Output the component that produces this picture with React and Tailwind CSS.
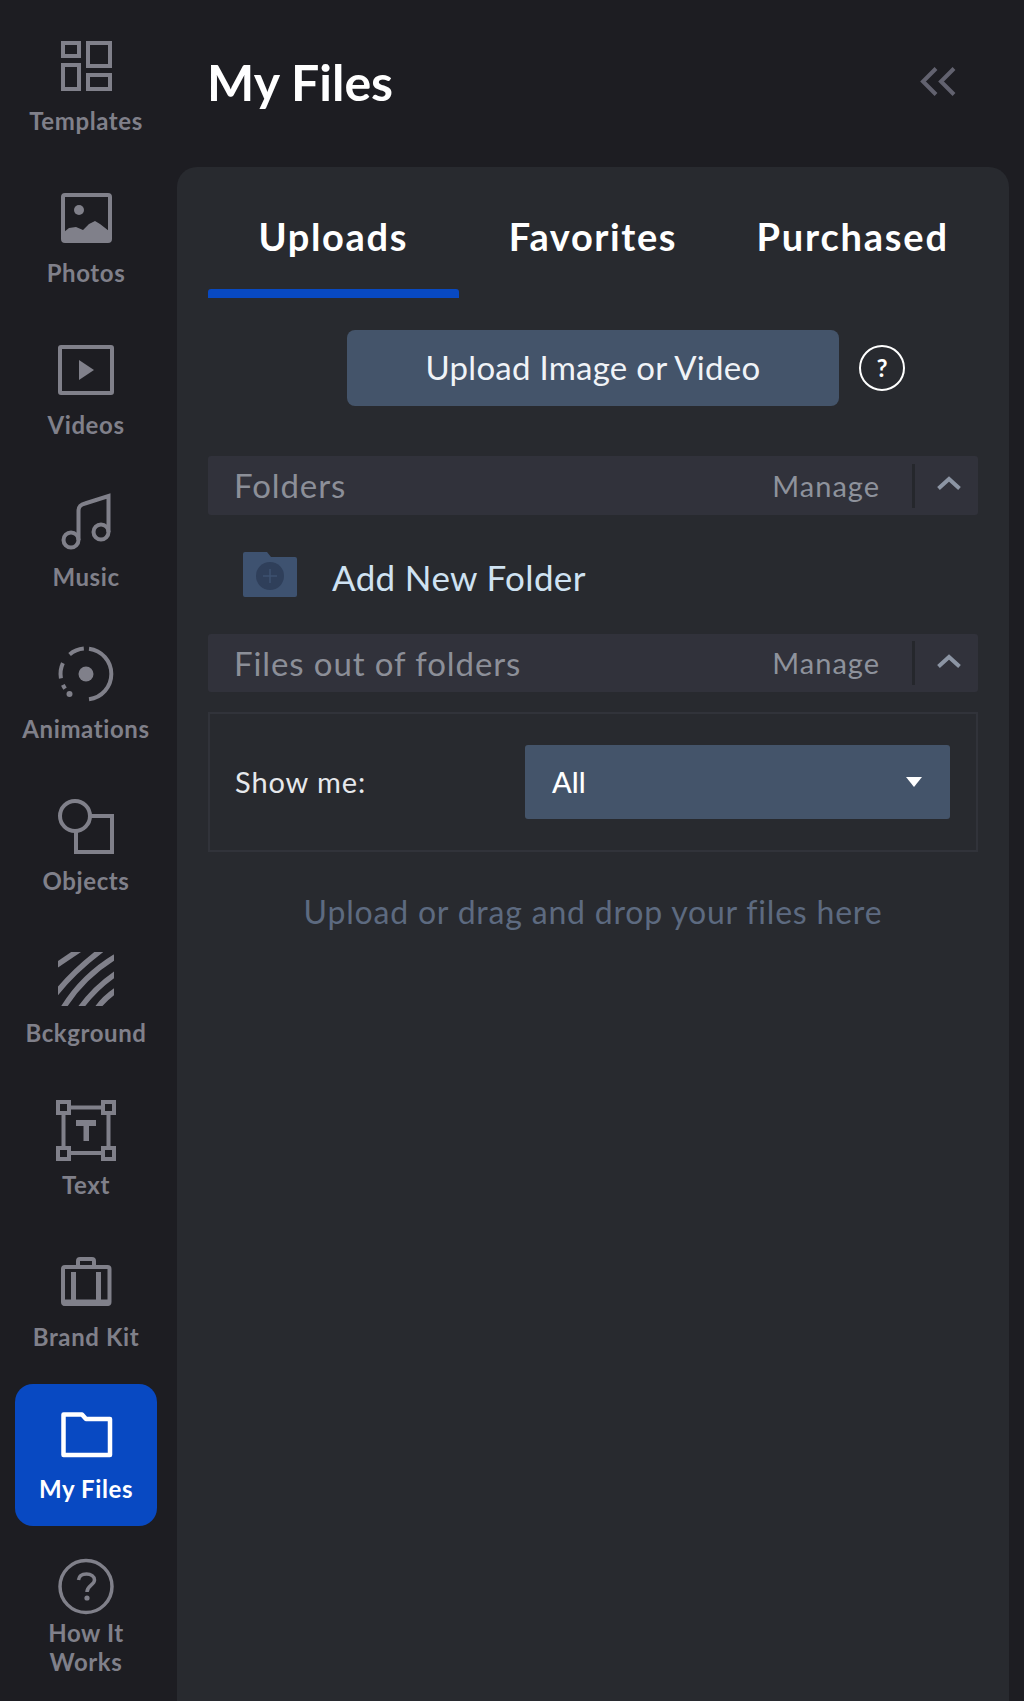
import React from "react";

const IconTemplates = () => (
  <svg viewBox="0 0 56 56" className="w-14 h-14 overflow-visible" fill="none" stroke="currentColor" strokeWidth="4">
    <rect x="5" y="5" width="16" height="13" />
    <rect x="30" y="5" width="22" height="23" />
    <rect x="5" y="27" width="16" height="24" />
    <rect x="30" y="37" width="22" height="14" />
  </svg>
);

const IconPhotos = () => (
  <svg viewBox="0 0 56 56" className="w-14 h-14 overflow-visible" fill="none" stroke="currentColor" strokeWidth="4">
    <rect x="5" y="5" width="47" height="46" rx="2" />
    <circle cx="21" cy="20" r="5" fill="currentColor" stroke="none" />
    <path d="M6 52 V42 L11 38 L18 37 L25 40 L31 34 L37 31 L42 34 L51 41 V52 Z" fill="currentColor" stroke="none" />
  </svg>
);

const IconVideos = () => (
  <svg viewBox="0 0 56 56" className="w-14 h-14 overflow-visible" fill="none" stroke="currentColor" strokeWidth="4">
    <rect x="2" y="5" width="52" height="46" rx="1" />
    <path d="M21 18 L36 28 L21 38 Z" fill="currentColor" stroke="none" />
  </svg>
);

const IconMusic = () => (
  <svg viewBox="0 0 56 56" className="w-14 h-14 overflow-visible" fill="none" stroke="currentColor" strokeWidth="4">
    <circle cx="13" cy="46" r="7.5" />
    <circle cx="43" cy="38" r="7.5" />
    <path d="M20.5 46 V17 C20.5 12 23 10.5 27 9.5 L50.5 2 V38" />
  </svg>
);

const IconAnimations = () => (
  <svg viewBox="0 0 56 56" className="w-14 h-14 overflow-visible" fill="none" stroke="currentColor" strokeWidth="4">
    <path d="M31 2.7 A25.5 25.5 0 0 1 31 53.3" />
    <path d="M25.8 2.6 A25.5 25.5 0 0 0 11.6 8.5" />
    <path d="M4.9 17.2 A25.5 25.5 0 0 0 2.9 32.4" />
    <path d="M4.9 38.8 A25.5 25.5 0 0 0 7.1 42.6" />
    <circle cx="11.5" cy="48" r="3" fill="currentColor" stroke="none" />
    <circle cx="28" cy="28" r="7.5" fill="currentColor" stroke="none" />
  </svg>
);

const IconObjects = () => (
  <svg viewBox="0 0 56 56" className="w-14 h-14 overflow-visible" fill="none" stroke="currentColor" strokeWidth="4">
    <circle cx="17" cy="18" r="15" />
    <path d="M33 18 H54 V54 H18 V33" />
  </svg>
);

const IconBackground = () => (
  <svg viewBox="0 0 56 56" className="w-14 h-14 overflow-visible" fill="none" stroke="currentColor" strokeWidth="5.5">
    <clipPath id="bg-clip">
      <rect x="0" y="2" width="56" height="54" rx="4" />
    </clipPath>
    <g clipPath="url(#bg-clip)">
      <path d="M-4 17 L24 -2" />
      <path d="M-4 46 Q14 22 46 -2" />
      <path d="M4 60 Q24 26 60 5" />
      <path d="M21 60 Q36 38 60 22" />
      <path d="M38 60 Q46 48 60 39" />
    </g>
  </svg>
);

const IconText = () => (
  <svg viewBox="0 0 56 56" className="w-14 h-14 overflow-visible" fill="none" stroke="currentColor" strokeWidth="4">
    <path d="M11 5.5 H45 M11 51 H45 M5.5 11 V45 M50.5 11 V45" />
    <rect x="0" y="0" width="11" height="11" />
    <rect x="45" y="0" width="11" height="11" />
    <rect x="0" y="46" width="11" height="11" />
    <rect x="45" y="46" width="11" height="11" />
    <path d="M18 18 H38 V24 H31 V39 H25.5 V24 H18 Z" fill="currentColor" stroke="none" />
  </svg>
);

const IconBrand = () => (
  <svg viewBox="0 0 56 56" className="w-14 h-14 overflow-visible" fill="none" stroke="currentColor" strokeWidth="4">
    <rect x="5" y="13" width="46.5" height="37" rx="2" />
    <path d="M20 12 V7 Q20 5 22 5 H34 Q36 5 36 7 V12" />
    <path d="M15.5 18 V48 M40.5 18 V48" strokeWidth="5" />
    <path d="M5 48.5 H51" strokeWidth="6" />
  </svg>
);

const IconFolder = () => (
  <svg viewBox="0 0 56 56" className="w-14 h-14 overflow-visible" fill="none" stroke="currentColor" strokeWidth="4.5" strokeLinejoin="round">
    <path d="M5.5 8.5 H24 L28 13 H52 V49 H5.5 Z" />
  </svg>
);

const IconHelp = () => (
  <svg viewBox="0 0 56 56" className="w-14 h-14 overflow-visible" fill="none" stroke="currentColor" strokeWidth="3.5">
    <circle cx="28" cy="28.5" r="26" />
    <path d="M20.5 22 C21 17.5 24.5 16 28.5 16 C33 16 36.5 18.5 36.5 22 C36.5 27 29 27.5 29 34" />
    <circle cx="29" cy="40" r="2.6" fill="currentColor" stroke="none" />
  </svg>
);

const NAV_ITEMS = [
  { label: "Templates", Icon: IconTemplates },
  { label: "Photos", Icon: IconPhotos },
  { label: "Videos", Icon: IconVideos },
  { label: "Music", Icon: IconMusic },
  { label: "Animations", Icon: IconAnimations },
  { label: "Objects", Icon: IconObjects },
  { label: "Bckground", Icon: IconBackground },
  { label: "Text", Icon: IconText },
  { label: "Brand Kit", Icon: IconBrand },
  { label: "My Files", Icon: IconFolder, active: true },
];

const NavItem = ({ label, Icon, active }) => (
  <div
    className={`h-[142px] rounded-[18px] flex flex-col items-center pt-[22px] ${
      active ? "bg-[#0849c2] text-white" : "text-[#80808a]"
    }`}
  >
    <Icon />
    <span className="mt-[13px] text-[24px] leading-[28px] tracking-[0.6px] font-bold whitespace-nowrap">{label}</span>
  </div>
);

const Chevron = () => (
  <svg width="24" height="14" viewBox="0 0 24 14" fill="none" stroke="#8c95a4" strokeWidth="4">
    <path d="M1.5 12.5 L12 3 L22.5 12.5" />
  </svg>
);

const SectionRow = ({ title, tall }) => (
  <div className={`${tall ? "h-[59px]" : "h-[58px]"} bg-[#31323b] rounded-[3px] flex items-center pl-[26px]`}>
    <span className="flex-1 pt-[1px] text-[33px] tracking-[0.9px] text-[#8c8f98]">{title}</span>
    <span className="text-[29px] tracking-[1px] text-[#8e929c]">Manage</span>
    <div className="w-[3px] h-[44px] bg-[#25272c] ml-[32px]" />
    <div className="w-[63px] flex justify-center pl-[4px] pb-[5px]">
      <Chevron />
    </div>
  </div>
);

const App = () => {
  return (
    <div className="w-[1024px] h-[1701px] overflow-hidden bg-[#1d1d22] flex font-[Lato,sans-serif]">
      <aside className="w-[142px] ml-[15px] mr-[20px] pt-4 flex flex-col gap-[10px] shrink-0">
        {NAV_ITEMS.map((item) => (
          <NavItem key={item.label} {...item} />
        ))}
        <div className="flex flex-col items-center pt-[22px] text-[#80808a]">
          <IconHelp />
          <span className="mt-[4px] text-[24px] leading-[29px] tracking-[0.6px] font-bold text-center">
            How It
            <br />
            Works
          </span>
        </div>
      </aside>

      <main className="w-[847px] flex flex-col">
        <header className="h-[167px] shrink-0 flex items-center pl-[30px] pr-[68px] pb-[4px]">
          <h1 className="flex-1 text-[50px] font-bold text-white leading-none">My Files</h1>
          <svg width="36" height="30" viewBox="0 0 36 30" fill="none" stroke="#62626f" strokeWidth="4">
            <path d="M16 1.5 L3 14.5 L16 27.5 M34 1.5 L21 14.5 L34 27.5" />
          </svg>
        </header>

        <section className="flex-1 w-[832px] bg-[#282a2f] rounded-t-[20px] px-[31px]">
          <div className="grid grid-cols-3 gap-[9px]">
            <div className="pt-[50px] text-center">
              <div className="text-[38px] leading-[38px] tracking-[1.7px] font-bold text-white pb-[34px]">Uploads</div>
              <div className="h-[9px] bg-[#0849c2] rounded-t-[3px]" />
            </div>
            <div className="pt-[50px] text-center text-[38px] leading-[38px] tracking-[1.6px] font-bold text-white">Favorites</div>
            <div className="pt-[50px] text-center text-[38px] leading-[38px] tracking-[1.8px] font-bold text-white whitespace-nowrap">Purchased</div>
          </div>

          <div className="mt-[32px] ml-[139px] flex items-center gap-[20px]">
            <button className="w-[492px] h-[76px] bg-[#44546a] rounded-[8px] text-[33px] tracking-[0.25px] text-[#f0f3f7]">
              Upload Image or Video
            </button>
            <div className="w-[46px] h-[46px] rounded-full border-2 border-white flex items-center justify-center text-[24px] leading-none font-bold text-white">
              ?
            </div>
          </div>

          <div className="mt-[50px]">
            <SectionRow title="Folders" tall />
          </div>

          <div className="h-[119px] flex items-center pl-[35px] gap-[35px]">
            <svg width="54" height="45" viewBox="0 0 54 45">
              <path d="M0 2 Q0 0 2 0 H24 L28 5 H52 Q54 5 54 7 V43 Q54 45 52 45 H2 Q0 45 0 43 Z" fill="#3e5270" />
              <circle cx="27" cy="24" r="14" fill="#2f3f5a" />
              <path d="M27 17 V31 M20 24 H34" stroke="#3e5270" strokeWidth="1.5" />
            </svg>
            <span className="pt-[5px] text-[35px] tracking-[0.35px] text-[#cfe2f2]">Add New Folder</span>
          </div>

          <SectionRow title="Files out of folders" />

          <div className="mt-[20px] h-[140px] border-2 border-[#31333a] flex items-center pl-[25px] pr-[26px]">
            <span className="flex-1 text-[29px] tracking-[0.9px] text-[#e6e8ec]">Show me:</span>
            <div className="w-[425px] h-[74px] bg-[#44546a] rounded-[3px] flex items-center pl-[27px] pr-[28px]">
              <span className="flex-1 text-[29px] font-medium text-white">All</span>
              <svg width="16" height="10" viewBox="0 0 16 10">
                <path d="M0 0 H16 L8 10 Z" fill="#ffffff" />
              </svg>
            </div>
          </div>

          <p className="mt-[40px] text-center text-[32px] leading-[40px] tracking-[0.8px] text-[#5d6a80]">
            Upload or drag and drop your files here
          </p>
        </section>
      </main>
    </div>
  );
};

export default App;
